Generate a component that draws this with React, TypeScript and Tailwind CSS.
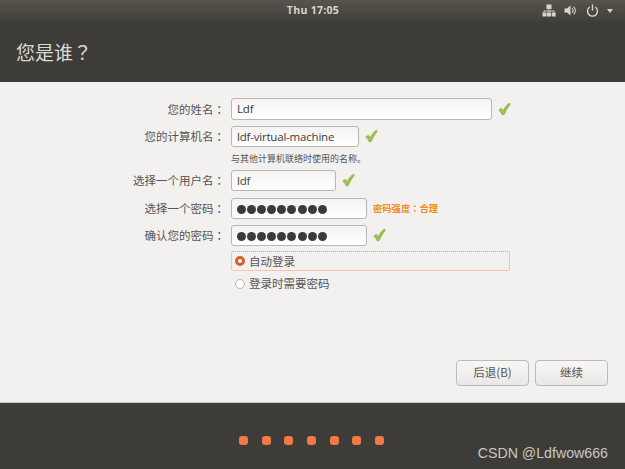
import React from "react";

const cjk = "font-['Noto_Sans_CJK_SC','Noto_Sans',sans-serif]";
// TC centres the full-width colon and question mark, as the reference does
const punct = "font-['Noto_Sans_CJK_TC','Noto_Sans',sans-serif]";

/* green tick shown next to a valid field */
const Tick = () => (
    <svg width="13" height="14" viewBox="0 0 14 14" className="shrink-0 -mt-[1px]">
        <path
            d="M.8 8.2 L3.6 6.2 L5.6 8.8 C7.4 5.4 9.4 2.6 12.2 .6 L13.4 1.8 C10.8 5 8.6 8.6 6.6 13.2 L4.4 13.2 C3.6 11.2 2.4 9.6 .8 8.2 Z"
            fill="#9dc24a"
            stroke="#7fa236"
            strokeWidth=".6"
        />
    </svg>
);

const Dots = () => (
    <span className="flex gap-[1.1px] mt-[1px]">
        {Array.from({ length: 9 }).map((_, i) => (
            <span key={i} className="w-[9px] h-[9px] rounded-full bg-[#3a3a3a]" />
        ))}
    </span>
);

type RowProps = {
    label: string;
    width: string;
    height?: string;
    children: React.ReactNode;
    after?: React.ReactNode;
};

const Row = ({ label, width, height = "h-[21px]", children, after }: RowProps) => (
    <div className="flex items-center">
        <label className={`w-[225px] mr-[6px] pt-[1px] text-right text-[11.5px] text-[#555] ${cjk}`}>
            {label}
            <span className={punct}>：</span>
        </label>
        <div
            className={`${width} ${height} mr-[6px] flex items-center px-[5px] rounded-[3px] border border-[#b9b7b3] bg-gradient-to-b from-[#f4f3f2] to-white text-[11.5px] tracking-[-0.2px] text-[#3c3c3c] font-['Open_Sans',sans-serif]`}
        >
            {children}
        </div>
        {after}
    </div>
);

const FooterButton = ({ label }: { label: string }) => (
    <button
        className={`w-[73px] h-[26px] rounded-[4px] border border-[#bdbbb7] bg-gradient-to-b from-[#f8f7f6] to-[#e9e8e6] text-[11.5px] text-[#555] ${cjk}`}
    >
        {label}
    </button>
);

const App: React.FC = () => {
    return (
        <div className={`w-[625px] h-[469px] flex flex-col overflow-hidden relative ${cjk}`}>
            {/* Top panel + title */}
            <header className="h-[82px] shrink-0 flex flex-col bg-[#3e3c38]">
                <div className="h-[22px] shrink-0 relative flex items-center justify-center pl-[1px] bg-gradient-to-b from-[#57544c] to-[#403e3a]">
                    <span className="text-[10.5px] font-bold text-[#d8d6d0] font-['Open_Sans',sans-serif] tracking-[.3px]">
                        Thu 17:05
                    </span>
                    <div className="absolute right-[12px] top-[4px] flex items-center gap-[8px]">
                        <svg width="14" height="13" viewBox="0 0 14 13" fill="#d6d4ce">
                            <rect x="4.5" y="0.5" width="5" height="4.5" />
                            <rect x="0.5" y="8.5" width="4" height="4" />
                            <rect x="5" y="8.5" width="4" height="4" />
                            <rect x="9.7" y="8.5" width="4" height="4" />
                            <path d="M6.6 5h.8v1.6h5v2h-.8V7.4H7.4v1.2h-.8V7.4H2.4v1.2h-.8v-2h5z" />
                        </svg>
                        <svg width="13" height="13" viewBox="0 0 13 13" fill="none" stroke="#d6d4ce">
                            <path d="M.5 4.5h2.5L6.5 1.5v10L3 8.5H.5z" fill="#d6d4ce" stroke="none" />
                            <path d="M8 4.2a3 3 0 0 1 0 4.6M9.6 2.6a5.2 5.2 0 0 1 0 7.8" strokeWidth="1.1" />
                        </svg>
                        <svg width="13" height="13" viewBox="0 0 13 13" fill="none" stroke="#d6d4ce" strokeWidth="1.4" className="ml-[1px]">
                            <path d="M3.7 3a5 5 0 1 0 5.6 0" />
                            <path d="M6.5 .5v6" />
                        </svg>
                        <span className="w-0 h-0 border-x-[3.5px] border-x-transparent border-t-[4px] border-t-[#d6d4ce]" />
                    </div>
                </div>
                <h1 className="flex-1 flex items-center pl-[16px] pt-[1px] text-[19px] font-normal text-[#dcdad5]">
                    您是谁<span className={punct}>？</span>
                </h1>
            </header>

            {/* Form */}
            <main className="flex-1 bg-[#f2f1f0] border-t border-[#f7f6f5] flex flex-col pt-[15px] border-b border-b-[#c9c8c5]">
                <div className="flex flex-col">
                    <Row label="您的姓名" width="w-[261px]" height="h-[22px]" after={<Tick />}>
                        Ldf
                    </Row>
                    <div className="mt-[6px]">
                        <Row label="您的计算机名" width="w-[128px]" after={<Tick />}>
                            ldf-virtual-machine
                        </Row>
                    </div>
                    <p className="pl-[231px] mt-[4px] h-[15px] leading-[15px] text-[9px] text-[#555]">
                        与其他计算机联络时使用的名称。
                    </p>
                    <div className="mt-[4px]">
                        <Row label="选择一个用户名" width="w-[105px]" after={<Tick />}>
                            ldf
                        </Row>
                    </div>
                    <div className="mt-[7px]">
                        <Row
                            label="选择一个密码"
                            width="w-[136px]"
                            after={
                                <span className="text-[9.3px] font-bold text-[#f08c1e]">
                                    密码强度<span className={punct}>：</span>合理
                                </span>
                            }
                        >
                            <Dots />
                        </Row>
                    </div>
                    <div className="mt-[6px]">
                        <Row label="确认您的密码" width="w-[136px]" after={<Tick />}>
                            <Dots />
                        </Row>
                    </div>
                    <div className="ml-[231px] mt-[5px] w-[279px] h-[20px] flex items-center gap-[4px] px-[3px] rounded-[2px] border border-dotted border-[#ee9a78] text-[11.5px] text-[#555]">
                        <span className="w-[10px] h-[10px] rounded-full bg-white border-[3px] border-[#d2602f]" />
                        <span className="pt-[1px]">自动登录</span>
                    </div>
                    <div className="ml-[231px] mt-[3px] h-[20px] flex items-center gap-[4px] px-[4px] text-[11.5px] text-[#555]">
                        <span className="w-[10px] h-[10px] rounded-full bg-white border border-[#b5b3af]" />
                        登录时需要密码
                    </div>
                </div>
                <div className="mt-auto flex justify-end gap-[6px] pr-[17px] pb-[16px]">
                    <FooterButton label="后退(B)" />
                    <FooterButton label="继续" />
                </div>
            </main>

            {/* Progress dots */}
            <footer className="h-[66px] shrink-0 bg-[#3e3c38] flex justify-center pt-[33px] gap-[13.6px] pr-[2px]">
                {Array.from({ length: 7 }).map((_, i) => (
                    <span key={i} className="w-[9px] h-[9px] rounded-[3px] bg-[#ef7a44]" />
                ))}
            </footer>

            <span className="absolute right-[17px] bottom-[5px] text-[14.2px] text-[#c9c8c5] font-['Liberation_Sans',sans-serif]">
                CSDN @Ldfwow666
            </span>
        </div>
    );
};

export default App;
